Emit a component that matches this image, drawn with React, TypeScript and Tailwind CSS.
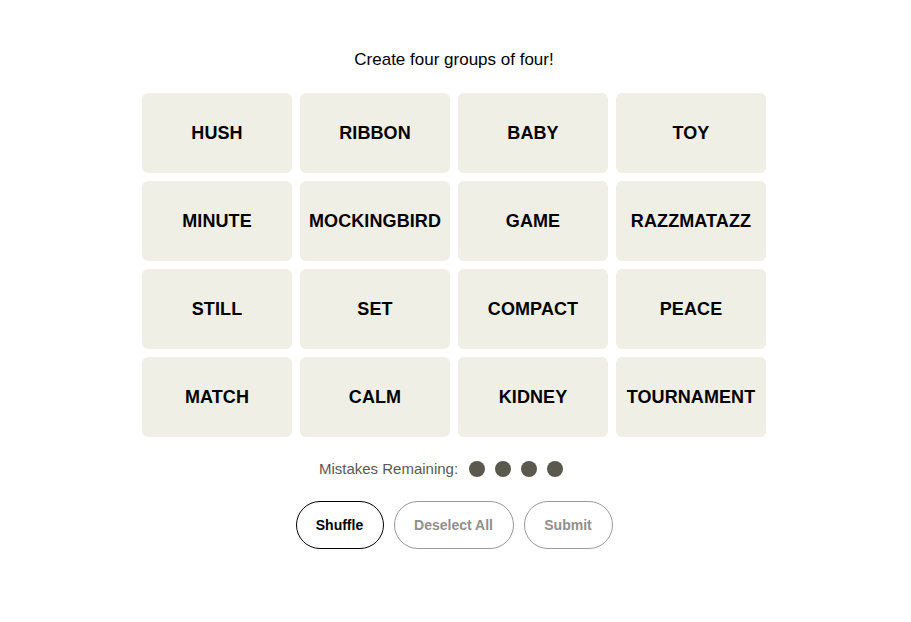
import React from "react";

const words = [
  "HUSH", "RIBBON", "BABY", "TOY",
  "MINUTE", "MOCKINGBIRD", "GAME", "RAZZMATAZZ",
  "STILL", "SET", "COMPACT", "PEACE",
  "MATCH", "CALM", "KIDNEY", "TOURNAMENT",
];

export default function App() {
  return (
    <div className="min-h-[622px] w-full bg-white flex flex-col items-center pt-[49px] pr-[3px]" style={{ fontFamily: '"Liberation Sans", Arial, sans-serif' }}>
      <p className="text-[17px] leading-[22px] text-black">Create four groups of four!</p>
      <div className="mt-[22px] grid grid-cols-[repeat(4,150px)] auto-rows-[80px] gap-2">
        {words.map((w) => (
          <div key={w} className="rounded-md bg-[#efefe6] flex items-center justify-center text-[18px] font-bold text-black tracking-[0.1px]">
            {w}
          </div>
        ))}
      </div>
      <div className="mt-[23px] mr-[26px] flex items-center h-[18px]">
        <span className="text-[15px] text-[#5a594e] mr-[11px]">Mistakes Remaining:</span>
        <div className="flex gap-[10px]">
          {[0, 1, 2, 3].map((i) => (
            <span key={i} className="w-4 h-4 rounded-full bg-[#5a594e]" />
          ))}
        </div>
      </div>
      <div className="mt-[23px] flex gap-[10px]">
        <button className="h-12 w-[88px] rounded-full border border-black text-[14px] font-bold text-black">Shuffle</button>
        <button className="h-12 w-[120px] rounded-full border border-[#999] text-[14px] font-bold text-[#8f8f8f]">Deselect All</button>
        <button className="h-12 w-[89px] rounded-full border border-[#999] text-[14px] font-bold text-[#8f8f8f]">Submit</button>
      </div>
    </div>
  );
}
